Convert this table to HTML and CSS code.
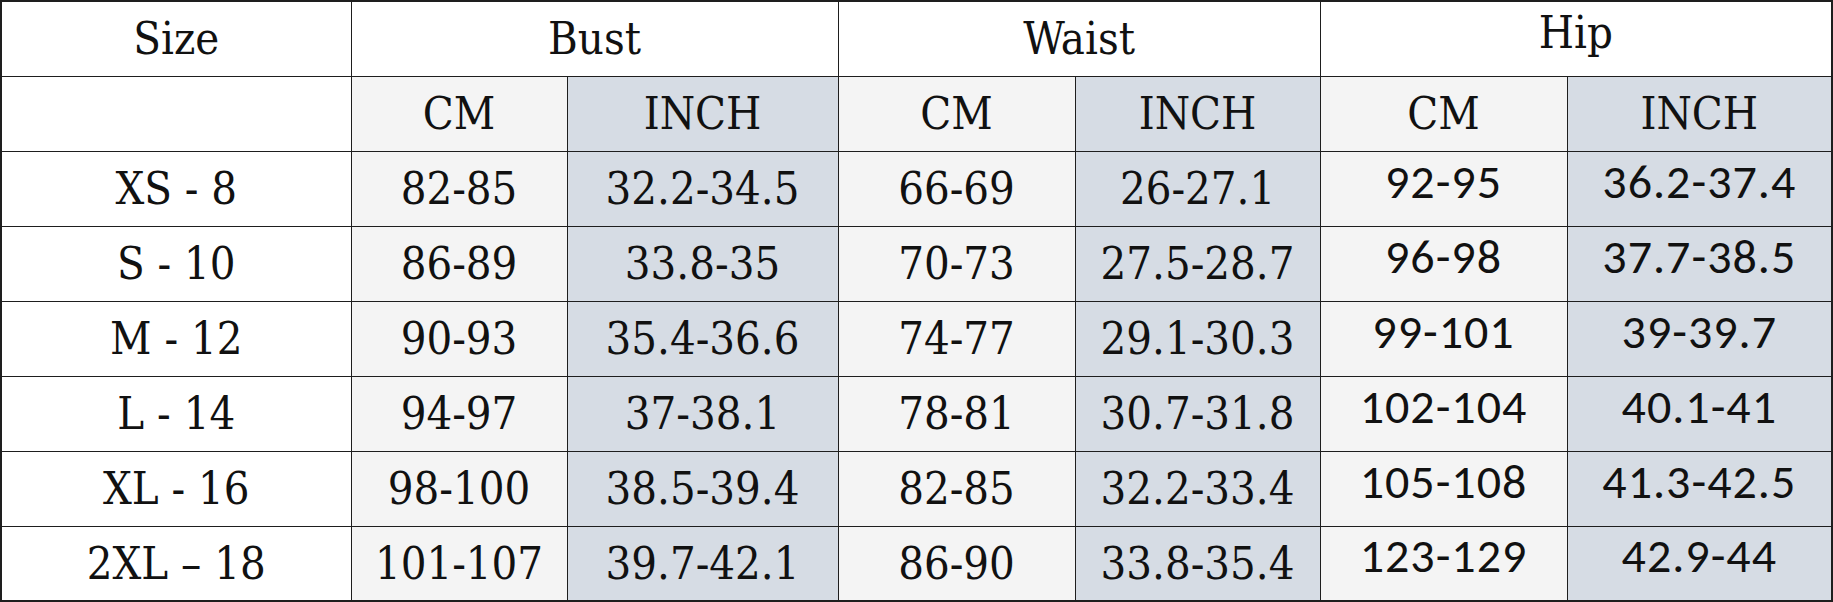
FILE: index.html
```html
<!DOCTYPE html>
<html>
<head>
<meta charset="utf-8">
<link rel="stylesheet" href="styles.css">
</head>
<body>
<table class="chart">
  <colgroup>
    <col class="c-size">
    <col class="c-bcm">
    <col class="c-bin">
    <col class="c-wcm">
    <col class="c-win">
    <col class="c-hcm">
    <col class="c-hin">
  </colgroup>
  <tr>
    <th class="head">Size</th>
    <th class="head" colspan="2">Bust</th>
    <th class="head" colspan="2">Waist</th>
    <th class="head hip-head" colspan="2">Hip</th>
  </tr>
  <tr>
    <td class="plain"></td>
    <td class="cm">CM</td><td class="inch">INCH</td>
    <td class="cm">CM</td><td class="inch">INCH</td>
    <td class="cm">CM</td><td class="inch">INCH</td>
  </tr>
  <tr>
    <td class="plain">XS - 8</td>
    <td class="cm">82-85</td><td class="inch">32.2-34.5</td>
    <td class="cm">66-69</td><td class="inch">26-27.1</td>
    <td class="cm hip">92-95</td><td class="inch hip">36.2-37.4</td>
  </tr>
  <tr>
    <td class="plain">S - 10</td>
    <td class="cm">86-89</td><td class="inch">33.8-35</td>
    <td class="cm">70-73</td><td class="inch">27.5-28.7</td>
    <td class="cm hip">96-98</td><td class="inch hip">37.7-38.5</td>
  </tr>
  <tr>
    <td class="plain">M - 12</td>
    <td class="cm">90-93</td><td class="inch">35.4-36.6</td>
    <td class="cm">74-77</td><td class="inch">29.1-30.3</td>
    <td class="cm hip">99-101</td><td class="inch hip">39-39.7</td>
  </tr>
  <tr>
    <td class="plain">L - 14</td>
    <td class="cm">94-97</td><td class="inch">37-38.1</td>
    <td class="cm">78-81</td><td class="inch">30.7-31.8</td>
    <td class="cm hip">102-104</td><td class="inch hip">40.1-41</td>
  </tr>
  <tr>
    <td class="plain">XL - 16</td>
    <td class="cm">98-100</td><td class="inch">38.5-39.4</td>
    <td class="cm">82-85</td><td class="inch">32.2-33.4</td>
    <td class="cm hip">105-108</td><td class="inch hip">41.3-42.5</td>
  </tr>
  <tr>
    <td class="plain">2XL – 18</td>
    <td class="cm">101-107</td><td class="inch">39.7-42.1</td>
    <td class="cm">86-90</td><td class="inch">33.8-35.4</td>
    <td class="cm hip">123-129</td><td class="inch hip">42.9-44</td>
  </tr>
</table>
</body>
</html>
```

FILE: styles.css
```css
html, body {
  margin: 0;
  padding: 0;
  background: #ffffff;
}

.chart {
  border-collapse: collapse;
  table-layout: fixed;
  width: 1831px;
  border: 2px solid #1e1e1e;
  font-family: "DejaVu Serif", "Liberation Serif", serif;
  font-stretch: condensed;
  font-size: 45px;
  color: #111;
}

.c-size { width: 350px; }
.c-bcm { width: 216px; }
.c-bin { width: 271px; }
.c-wcm { width: 237px; }
.c-win { width: 245px; }
.c-hcm { width: 247px; }
.c-hin { width: 265px; }

.chart tr {
  height: 75px;
}

.chart th,
.chart td {
  border: 1px solid #1e1e1e;
  padding: 0;
  text-align: center;
  vertical-align: middle;
  font-weight: normal;
  white-space: nowrap;
  line-height: 1;
}

.head,
.plain {
  background: #ffffff;
}

.cm {
  background: #f4f4f4;
}

.inch {
  background: #d6dce4;
}

.chart .hip-head {
  padding-bottom: 12px;
}

.chart .hip {
  font-family: "Carlito", "Lato", "Liberation Sans", sans-serif;
  font-stretch: normal;
  font-size: 48px;
  letter-spacing: 1px;
  padding-bottom: 14px;
}
```
